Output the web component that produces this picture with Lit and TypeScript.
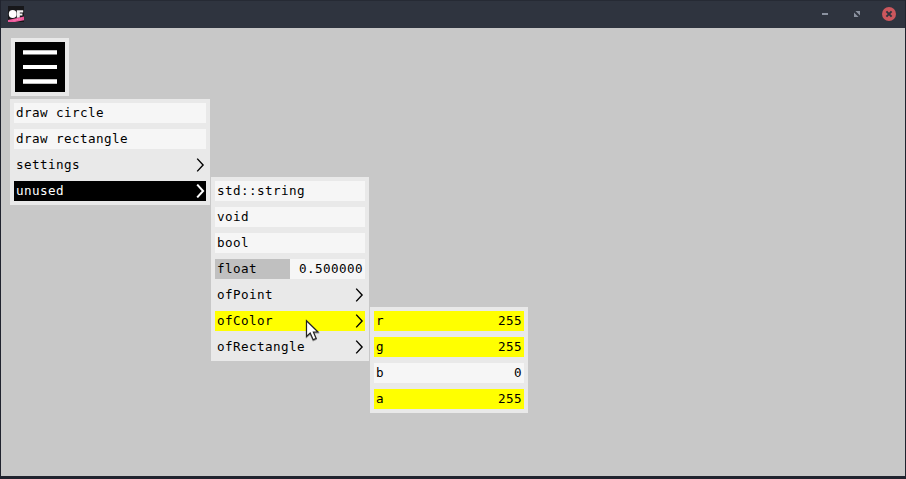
import { LitElement, html, css, nothing } from "lit";
import { customElement, property } from "lit/decorators.js";
import { classMap } from "lit/directives/class-map.js";

interface Item {
  label: string;
  value?: string;
  kind?: "plain" | "group";
  tone?: "black" | "yellow";
  fill?: number;
}

const mainItems: Item[] = [
  { label: "draw circle" },
  { label: "draw rectangle" },
  { label: "settings", kind: "group" },
  { label: "unused", kind: "group", tone: "black" },
];

const typeItems: Item[] = [
  { label: "std::string" },
  { label: "void" },
  { label: "bool" },
  { label: "float", value: "0.500000", fill: 0.5 },
  { label: "ofPoint", kind: "group" },
  { label: "ofColor", kind: "group", tone: "yellow" },
  { label: "ofRectangle", kind: "group" },
];

const colorItems: Item[] = [
  { label: "r", value: "255", tone: "yellow" },
  { label: "g", value: "255", tone: "yellow" },
  { label: "b", value: "0" },
  { label: "a", value: "255", tone: "yellow" },
];

@customElement("menu-panel")
export class MenuPanel extends LitElement {
  @property({ attribute: false }) items: Item[] = [];

  static styles = css`
    :host {
      display: flex;
      flex-direction: column;
      gap: 6px;
      padding: 4px;
      box-sizing: border-box;
      background: #e9e9e9;
      font: 12.6px/20px "DejaVu Sans Mono", monospace;
      letter-spacing: 0.414px;
      color: #000;
    }
    .row {
      display: flex;
      justify-content: space-between;
      height: 20px;
      padding: 0 1px 0 2px;
      background: #f6f6f6;
      white-space: pre;
    }
    .group {
      background: none;
    }
    .black {
      background: #000;
      color: #fff;
    }
    .yellow {
      background: #ff0;
    }
    .value {
      margin-right: 1px;
    }
    .arrow {
      width: 9px;
      height: 14px;
      margin: 3px 0 0;
      fill: none;
      stroke: currentColor;
      stroke-width: 1.4;
    }
    .black .arrow {
      stroke-width: 2;
    }
  `;

  render() {
    return this.items.map((item) => {
      const classes = {
        row: true,
        group: item.kind === "group",
        black: item.tone === "black",
        yellow: item.tone === "yellow",
      };
      const stop = (item.fill ?? 0) * 100;
      const bar = item.fill
        ? `background: linear-gradient(90deg, #c0c0c0 ${stop}%, #f6f6f6 ${stop}%)`
        : nothing;
      return html`<div class=${classMap(classes)} style=${bar}>
        <span>${item.label}</span>
        ${item.value ? html`<span class="value">${item.value}</span>` : nothing}
        ${item.kind === "group"
          ? html`<svg class="arrow" viewBox="0 0 9 14"><path d="M1.2 .6L7.1 7L1.2 13.4" /></svg>`
          : nothing}
      </div>`;
    });
  }
}

@customElement("app-root")
export class AppRoot extends LitElement {
  static styles = css`
    :host {
      display: flex;
      flex-direction: column;
      position: relative;
      width: 906px;
      height: 479px;
      box-sizing: border-box;
      overflow: hidden;
      background: #20232e;
    }
    .titlebar {
      display: flex;
      align-items: center;
      height: 28px;
      box-sizing: border-box;
      border-top: 1px solid #262a34;
      margin: 0 1px;
      padding: 0 9px 1px 7px;
      background: #2f343f;
    }
    .logo {
      width: 16px;
      height: 16px;
    }
    .controls {
      display: flex;
      align-items: center;
      gap: 18px;
      margin-left: auto;
    }
    .controls svg {
      width: 14px;
      height: 14px;
    }
    .canvas {
      height: 448px;
      box-sizing: border-box;
      margin: 0 1px;
      padding: 10px 9px 0;
      background: #c8c8c8;
    }
    .burger {
      display: flex;
      width: 58px;
      height: 58px;
      box-sizing: border-box;
      margin: 0 0 3px 1px;
      border: 4px solid #e9e9e9;
      background: #000;
    }
    .menus {
      display: flex;
      align-items: flex-start;
      gap: 1px;
    }
    .main {
      width: 200px;
    }
    .types {
      width: 158px;
      margin-top: 78px;
    }
    .colors {
      width: 158px;
      margin-top: 208px;
    }
    .cursor {
      position: absolute;
      left: 304px;
      top: 318px;
      width: 18px;
      height: 26px;
      filter: drop-shadow(0.5px 1px 0.7px rgba(0, 0, 0, 0.35));
    }
  `;

  render() {
    return html`
      <div class="titlebar">
        <svg class="logo" viewBox="0 0 16 16">
          <rect width="16" height="16" fill="#17171a" />
          <circle cx="4.7" cy="8" r="3.9" fill="#fff" />
          <path d="M8.8 4.2h6.4v2.2h-3.4v1h2.6v2h-2.6v2.4h-3z" fill="#f4f4f4" />
          <path d="M0 14L16 10.6V14.2L7 16H0z" fill="#ee5a9c" />
          <path d="M5.5 14.3L13.5 12.7" stroke="#f58fbc" stroke-width="1" stroke-dasharray="1.2 .6" />
        </svg>
        <div class="controls">
          <svg viewBox="0 0 14 14"><rect x="4" y="6" width="6" height="2" fill="#8b92a0" /></svg>
          <svg viewBox="0 0 14 14" fill="#8b92a0">
            <path d="M5.4 4H10V8.6zM4 5.4V10H8.6z" />
          </svg>
          <svg viewBox="0 0 14 14">
            <circle cx="7" cy="7" r="7" fill="#cc575d" />
            <path d="M4.4 4.4L9.6 9.6M9.6 4.4L4.4 9.6" stroke="#2f343f" stroke-width="2" />
          </svg>
        </div>
      </div>
      <div class="canvas">
        <svg class="burger" viewBox="0 0 50 50" fill="#fff">
          <path d="M8 8.2h34v4.3H8zM8 23h34v4H8zM8 37.3h34v4.4H8z" />
        </svg>
        <div class="menus">
          <menu-panel class="main" .items=${mainItems}></menu-panel>
          <menu-panel class="types" .items=${typeItems}></menu-panel>
          <menu-panel class="colors" .items=${colorItems}></menu-panel>
        </div>
      </div>
      <svg class="cursor" viewBox="0 0 18 26">
        <path
          d="M2.5 2.7V18.4L6.2 15L9.2 21.7L12.2 20.4L9.4 14H14z"
          fill="#fff"
          stroke="#222"
          stroke-width="1.2"
        />
      </svg>
    `;
  }
}
